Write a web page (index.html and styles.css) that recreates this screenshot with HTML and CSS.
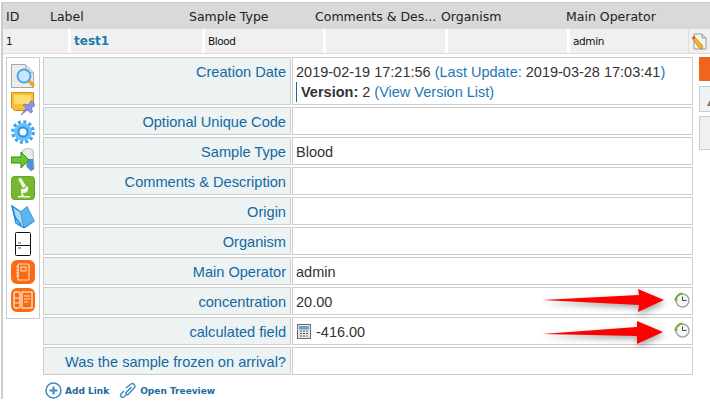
FILE: index.html
```html
<!DOCTYPE html>
<html lang="en">
<head>
<meta charset="utf-8">
<title>Sample</title>
<link rel="stylesheet" href="styles.css">
</head>
<body>
<div class="page">
  <div class="head">
    <span>ID</span><span>Label</span><span>Sample Type</span><span>Comments &amp; Des...</span><span>Organism</span><span>Main Operator</span>
  </div>
  <div class="datarow">
    <div class="dc">1</div>
    <div class="dc name">test1</div>
    <div class="dc">Blood</div>
    <div class="dc"></div>
    <div class="dc"></div>
    <div class="dc">admin</div>
    <div class="dc edit">
      <svg width="16" height="17" viewBox="0 0 16 17"><path d="M3 1h8l4 4v11H3z" fill="#f4f4f4" stroke="#999"/><path d="M11 1v4h4" fill="#ddd" stroke="#999"/><path d="M1 5l2-2 9 10-1 3-3-1z" fill="#f2b32c" stroke="#b9791b" stroke-width=".7"/><path d="M1 5l2-2 1.500 1.600-2 2z" fill="#e0563c"/></svg>
    </div>
  </div>
  <div class="content">
    <div class="tools">
      <svg class="ti" viewBox="0 0 24 24"><path d="M.5.5h14l8 8v15H.5z" fill="#ececec" stroke="#a5a5a5"/><path d="M14.500.5v8h8" fill="#dcdcdc" stroke="#b5b5b5"/><circle cx="13" cy="12" r="6.500" fill="#c8e7fa" stroke="#4aa6e6" stroke-width="2"/><path d="M18 17l5 5" stroke="#e9a82a" stroke-width="3.500"/></svg>
      <svg class="ti" viewBox="0 0 24 24"><path d="M.5.5h22v13l-5 5H4l-3.500-3z" fill="#f8bf35" stroke="#d58d12"/><path d="M3 3h17v9H3z" fill="#fcdc6c"/><path d="M10 23l5-7-3-3 2-1 3 1 3-4 2 1 2.500 3-4 3 1 4-2 1-3-3z" fill="#8a94e6" stroke="#5c67c4" stroke-width=".6"/></svg>
      <svg class="ti" viewBox="0 0 24 24"><circle cx="12" cy="12" r="10.200" fill="none" stroke="#3fa2ee" stroke-width="3.300" stroke-dasharray="3 2.340"/><circle cx="12" cy="12" r="9" fill="#6cc0f7"/><circle cx="12" cy="12" r="4.500" fill="#f4fbff" stroke="#2f8fe0" stroke-width="2"/></svg>
      <svg class="ti" viewBox="0 0 24 24"><path d="M11 3l5-3 6 2 1 19-3 2-4-4-3-8z" fill="#e6efe6" stroke="#9bb49b" stroke-width=".8"/><path d="M15 11l7 0 1 10-3 2-4-4z" fill="#4b93d9"/><path d="M0 9h10V4l8 8-8 8v-5H0z" fill="#6cc72f" stroke="#2c8f18"/></svg>
      <svg class="ti" viewBox="0 0 24 24"><rect x=".5" y=".5" width="23" height="23" rx="3" fill="#76b82f" stroke="#67a82a"/><path d="M7 3l3-1 5 8-3 2z M10 13c4 0 5-1 5-3l2 1c1 3-1 6-4 6h-3z M7 20h12v1.500H7z M11 16l2 4h-3z" fill="#f0f7e6"/></svg>
      <svg class="ti" viewBox="0 0 24 24"><path d="M1 2l9 6 6-5 7 14-10 7-8-5z" fill="#a8d8f6" stroke="#1d85d8" stroke-width="1.300"/><path d="M1 2l3 11 6 8M10 8l3 15" fill="none" stroke="#1d85d8" stroke-width="1.300"/><path d="M10 8l6-5 7 14-10 6z" fill="#5eb4ee"/></svg>
      <svg class="ti" viewBox="0 0 24 24"><rect x="4.500" y=".5" width="15" height="23" rx="1" fill="#fff" stroke="#111"/><path d="M4.500 13.500h15" stroke="#111"/><path d="M7 11h3M7 16h3" stroke="#555"/></svg>
      <svg class="ti" viewBox="0 0 24 24"><rect width="24" height="24" rx="6" fill="#fb6a0f"/><rect x="7" y="4" width="11" height="16" rx="1" fill="none" stroke="#fde2cf" stroke-width="1.200"/><path d="M5 7h3M5 10h3M5 13h3M5 16h3" stroke="#fde2cf"/><rect x="10" y="7" width="5" height="4" fill="none" stroke="#fde2cf"/></svg>
      <svg class="ti" viewBox="0 0 24 24"><rect width="24" height="24" rx="6" fill="#fb6a0f"/><rect x="3" y="4" width="6" height="16" rx="1.500" fill="none" stroke="#fde2cf" stroke-width="1.300"/><path d="M3 10h6M3 15h6" stroke="#fde2cf"/><rect x="11" y="4" width="10" height="16" fill="none" stroke="#fde2cf" stroke-width="1.300"/><path d="M13 8h6M13 11h6M13 14h4" stroke="#fde2cf"/></svg>
    </div>
    <div class="main">
      <div class="form">
        <div class="lab">Creation Date</div>
        <div class="val stack">
          <div>2019-02-19 17:21:56 <span class="lnk">(Last Update:</span> 2019-03-28 17:03:41<span class="lnk">)</span></div>
          <div class="ver"><b>Version:</b> 2 <span class="lnk">(View Version List)</span></div>
        </div>
        <div class="lab">Optional Unique Code</div><div class="val"></div>
        <div class="lab">Sample Type</div><div class="val">Blood</div>
        <div class="lab">Comments &amp; Description</div><div class="val"></div>
        <div class="lab">Origin</div><div class="val"></div>
        <div class="lab">Organism</div><div class="val"></div>
        <div class="lab">Main Operator</div><div class="val">admin</div>
        <div class="lab">concentration</div>
        <div class="val">20.00
          <svg class="clock" viewBox="0 0 16 16"><circle cx="8.500" cy="8.500" r="6.500" fill="#f6f6f6" stroke="#a8a8a8" stroke-width="1.500"/><path d="M1.500 8.500a7 7 0 0 1 7-7" fill="none" stroke="#6fb52c" stroke-width="1.800"/><path d="M0 7h4L2 10z" fill="#6fb52c"/><path d="M8.500 4.500v4h4" fill="none" stroke="#444"/></svg>
        </div>
        <div class="lab">calculated field</div>
        <div class="val">
          <svg class="calc" viewBox="0 0 14 15"><rect x=".5" y=".5" width="13" height="14" fill="#e6e6e6" stroke="#6c6c6c"/><rect x="2.500" y="2.500" width="9" height="2.500" fill="#5fa4d8" stroke="#4c7ea5" stroke-width=".5"/><path d="M3 7h2M6 7h2M9 7h2M3 9.500h2M6 9.500h2M9 9.500h2M3 12h2M6 12h2" stroke="#555"/><path d="M9 12h2" stroke="#d05a4a"/></svg>
          -416.00
          <svg class="clock" viewBox="0 0 16 16"><circle cx="8.500" cy="8.500" r="6.500" fill="#f6f6f6" stroke="#a8a8a8" stroke-width="1.500"/><path d="M1.500 8.500a7 7 0 0 1 7-7" fill="none" stroke="#6fb52c" stroke-width="1.800"/><path d="M0 7h4L2 10z" fill="#6fb52c"/><path d="M8.500 4.500v4h4" fill="none" stroke="#444"/></svg>
        </div>
        <div class="lab">Was the sample frozen on arrival?</div><div class="val"></div>
      </div>
      <div class="foot">
        <span class="act"><svg width="17" height="17" viewBox="0 0 17 17"><circle cx="8.500" cy="8.500" r="7.500" fill="none" stroke="#3d8cc4" stroke-width="1.500"/><path d="M8.500 4.500v8M4.500 8.500h8" stroke="#3d8cc4" stroke-width="2"/></svg>Add Link</span>
        <span class="act"><svg width="18" height="17" viewBox="0 0 18 17"><path d="M7 6l5-4c2-1.500 5 1.500 3.500 3.500L9.500 12c-1.500 1.500-3.500-.5-2-2l5-5" fill="none" stroke="#3d8cc4" stroke-width="1.500"/><path d="M5 9l-3 3c-1.500 2 1 4.500 3 3l3-3" fill="none" stroke="#3d8cc4" stroke-width="1.500"/></svg>Open Treeview</span>
      </div>
    </div>
    <div class="side">
      <div class="s1"></div>
      <div class="s2"><svg class="s2i" width="4" height="6" viewBox="0 0 4 6"><path d="M0 6l3-6h1v6z" fill="#8a7a5a"/></svg></div>
      <div class="s3"></div>
    </div>
  </div>
</div>
<svg class="arrows" width="710" height="409" viewBox="0 0 710 409">
  <polygon points="542,300 639,295 638,289 664,300 638,312 639,305" fill="#fe0000"/>
  <polygon points="542,334 637,327 637,321 663,332 637,344 637,336" fill="#fe0000"/>
</svg>
</body>
</html>
```
FILE: styles.css
```css
html, body {
  margin: 0;
  padding: 0;
  background: #fff;
  overflow: hidden;
  height: 409px;
}
.page {
  width: 720px;
  margin: 2px 0 0 1px;
  border-left: 2px solid #ccc;
  border-top: 1px solid #ccc;
  font-family: "Liberation Sans", Arial, sans-serif;
}
.head {
  display: grid;
  grid-template-columns: 44px 139px 126px 126px 125px 1fr;
  height: 26px;
  padding-left: 3px;
  align-items: center;
  background: #d9d9d9;
  color: #222;
  font: 12.5px "DejaVu Sans", Verdana, sans-serif;
}
.datarow {
  display: grid;
  grid-template-columns: 65px 131px 118px 119px 119px 118px 1fr;
  column-gap: 3px;
  height: 24px;
  background: #fff;
  border-bottom: 1px solid #ddd;
}
.dc {
  background: #f0f0f0;
  padding: 0 0 0 3px;
  margin: 0;
  display: flex;
  align-items: center;
  font: 10.5px "DejaVu Sans", Tahoma, sans-serif;
  letter-spacing: -.4px;
  color: #111;
}
.dc.name {
  font-weight: bold;
  font-size: 12px;
  letter-spacing: 0;
  color: #1b7ba8;
}
.edit {
  border-left: 1px solid #ddd;
  margin-left: -3px;
  padding-left: 2px;
}
.content {
  display: flex;
  align-items: flex-start;
  padding: 3px 0 0 3px;
}
.tools {
  width: 34px;
  height: 262px;
  box-sizing: border-box;
  flex: none;
  border: 1px solid #ccc;
  padding-top: 6px;
  display: flex;
  flex-direction: column;
  align-items: center;
  gap: 4px;
}
.ti { width: 24px; height: 24px; display: block; }
.main {
  margin-left: 3px;
  width: 650px;
  flex: none;
}
.form {
  display: grid;
  grid-template-columns: 248px 1fr;
  grid-template-rows: 48px repeat(9, 28px);
  column-gap: 1px;
  row-gap: 2px;
}
.lab, .val {
  box-sizing: border-box;
  border: 1px solid #ccc;
  display: flex;
  align-items: center;
  font-size: 14.6px;
  padding-top: 1px;
}
.lab {
  justify-content: flex-end;
  padding-right: 4px;
  background: #edf2f2;
  color: #1269a3;
}
.lab:first-child { align-items: flex-start; padding-top: 4px; line-height: 20px; }
.val {
  padding-left: 3px;
  padding-right: 3px;
  font-size: 14.5px;
  color: #333;
  background: #fff;
}
.stack {
  display: block;
  padding-top: 4px;
  line-height: 20px;
}
.lnk { color: #1b78b5; }
.ver {
  border-left: 1px solid #1269a3;
  padding-left: 4px;
  height: 20px;
}
.clock {
  width: 16px;
  height: 16px;
  margin-left: auto;
  margin-right: -1px;
  align-self: flex-start;
  margin-top: 3px;
}
.calc {
  width: 14px;
  height: 15px;
  margin: 0 5px 0 1px;
}
.foot {
  display: flex;
  gap: 10px;
  margin: 7px 0 0 2px;
}
.act {
  display: flex;
  align-items: center;
  gap: 3px;
  font: bold 9px "DejaVu Sans", Verdana, sans-serif;
  color: #1d6a9e;
}
.side {
  margin-left: 6px;
  width: 24px;
  flex: none;
}
.s1 { height: 24px; background: #f0641e; }
.s2 {
  box-sizing: border-box;
  height: 26px;
  margin-top: 5px;
  border: 1px solid #ccc;
  background: #edf2f2;
  padding: 13px 0 0 7px;
}
.s2i { display: block; }
.s3 {
  box-sizing: border-box;
  height: 34px;
  margin-top: 4px;
  border: 1px solid #ccc;
  background: #f0f0f0;
}
.arrows {
  position: absolute;
  left: 0;
  top: 0;
  pointer-events: none;
  filter: drop-shadow(1px 3px 3px rgba(0,0,0,.35));
}
```
